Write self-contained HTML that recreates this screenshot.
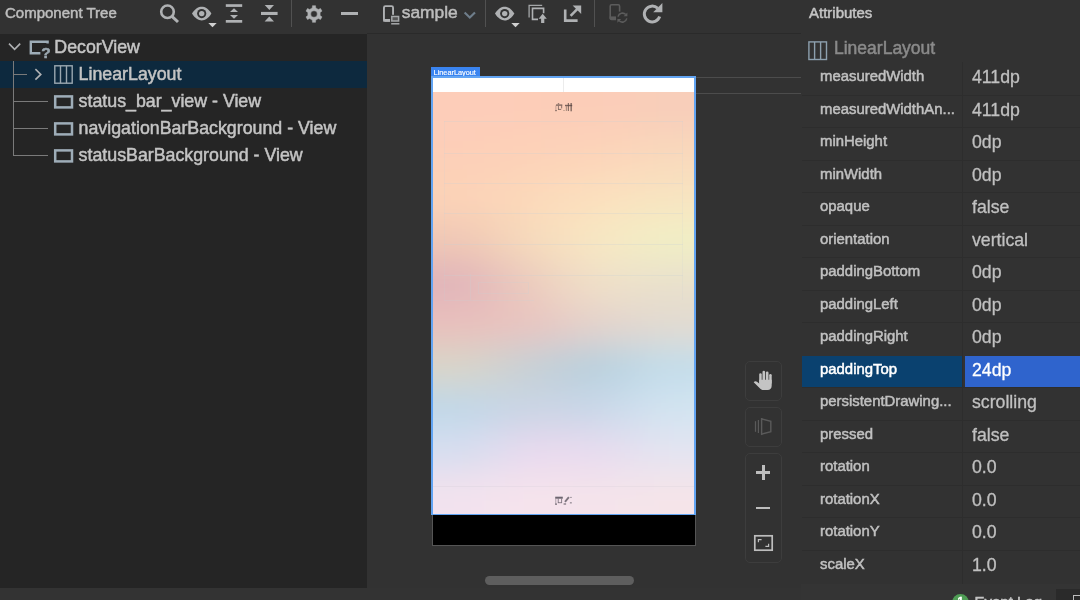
<!DOCTYPE html>
<html>
<head>
<meta charset="utf-8">
<style>
*{box-sizing:border-box;margin:0;padding:0}
html,body{width:1080px;height:600px;overflow:hidden;background:#323232;font-family:"Liberation Sans",sans-serif;color:#bbbbbb;-webkit-text-stroke:0.500px currentColor}
.abs{position:absolute}
#toolbar{left:0;top:0;width:1080px;height:34px;background:#323232}
#tbline{left:367px;top:33px;width:434px;height:1px;background:#2a2a2a}
#tree{left:0;top:33.700px;width:367px;height:554.300px;background:#252525}
.trow{position:absolute;left:0;width:367px;height:27px}
.trow.sel{background:#0d293e}
.ttext{position:absolute;left:78.600px;top:0.600px;height:27px;line-height:27px;font-size:17.8px;color:#c4c4c4;white-space:nowrap}
.sep{position:absolute;top:0;width:1px;height:27px;background:#515151}
svg{position:absolute;overflow:visible}
#right{left:801px;top:0;width:279px;height:600px;background:#323232}
.arow{position:absolute;left:1px;width:278px;height:32.5px;border-top:1px solid #2d2d2d}
.arow .n{position:absolute;left:18px;top:0;height:27px;line-height:27px;font-size:14.9px;color:#c0c0c0;white-space:nowrap}
.arow .v{position:absolute;left:170px;top:0;height:28px;line-height:28px;font-size:17.700px;color:#c0c0c0;white-space:nowrap;-webkit-text-stroke:0.300px currentColor}
.arow.sel .n{color:#fff}.arow.sel .v{color:#fff}
</style>
</head>
<body>
<div id="wrap" style="position:absolute;left:0;top:0;width:1080px;height:600px;will-change:transform">
<div id="toolbar" class="abs"></div>
<div id="tbline" class="abs"></div>


<div class="abs" style="left:5px;top:0;height:27px;line-height:26px;font-size:15px;color:#bdbdbd;white-space:nowrap">Component Tree</div>
<!-- search -->
<svg style="left:158px;top:3px" width="22" height="22" viewBox="0 0 22 22"><circle cx="9.500" cy="8.750" r="6.300" fill="none" stroke="#afb1b3" stroke-width="2.600"/><path d="M13.700 13.100 L20 19" stroke="#afb1b3" stroke-width="3"/></svg>
<!-- eye 1 -->
<svg style="left:191px;top:5px" width="28" height="24" viewBox="0 0 28 24"><path d="M1 8.6 C4 3.6 7.5 1.8 10.7 1.8 C14 1.8 17.5 3.6 20.4 8.6 C17.5 13.6 14 15.4 10.7 15.4 C7.5 15.4 4 13.6 1 8.6 Z" fill="#afb1b3"/><circle cx="10.7" cy="8.6" r="4.6" fill="#323232"/><circle cx="10.7" cy="8.6" r="2.7" fill="#afb1b3"/><path d="M17.3 18 L25.7 18 L21.5 22.2 Z" fill="#d0d0d0"/></svg>
<!-- expand all -->
<svg style="left:225px;top:3px" width="18" height="22" viewBox="0 0 18 22"><rect x="0.8" y="1.2" width="16.4" height="2.7" fill="#afb1b3"/><rect x="0.8" y="17" width="16.4" height="2.7" fill="#afb1b3"/><path d="M9 5.2 L13 9 L5 9 Z" fill="#afb1b3"/><path d="M5 12 L13 12 L9 15.8 Z" fill="#afb1b3"/></svg>
<!-- collapse all -->
<svg style="left:260px;top:3px" width="18" height="22" viewBox="0 0 18 22"><rect x="1" y="8.900" width="16.600" height="3.100" fill="#afb1b3"/><path d="M4.700 2 L14 2 L9.350 7.100 Z" fill="#afb1b3"/><path d="M9.3 13.6 L14 18.6 L4.6 18.6 Z" fill="#afb1b3"/></svg>
<div class="sep" style="left:291px"></div>
<!-- gear -->
<svg style="left:303.900px;top:3.600px" width="20" height="20" viewBox="0 0 20 20"><path fill="#afb1b3" fill-rule="evenodd" stroke="#afb1b3" stroke-width="0.500" stroke-linejoin="round" d="M11.76 3.95 L11.51 1.63 L8.49 1.63 L8.24 3.95 L5.64 5.45 L3.51 4.51 L2.00 7.12 L3.88 8.50 L3.88 11.50 L2.00 12.88 L3.51 15.49 L5.64 14.55 L8.24 16.05 L8.49 18.37 L11.51 18.37 L11.76 16.05 L14.36 14.55 L16.49 15.49 L18.00 12.88 L16.12 11.50 L16.12 8.50 L18.00 7.12 L16.49 4.51 L14.36 5.45 Z M13.30 10.00 A3.3 3.3 0 1 0 6.70 10.00 A3.3 3.3 0 1 0 13.30 10.00 Z"/></svg>
<!-- minus -->
<div class="abs" style="left:341px;top:11.6px;width:16.5px;height:3.4px;background:#afb1b3"></div>
<!-- device icon -->
<svg style="left:382px;top:4px" width="20" height="22" viewBox="0 0 20 22"><rect x="1.950" y="2.150" width="9.100" height="14.700" rx="1.500" fill="none" stroke="#afb1b3" stroke-width="1.900"/><rect x="1.200" y="15" width="8" height="2.700" fill="#afb1b3"/><rect x="8.100" y="10.800" width="10.400" height="8" fill="#323232"/><rect x="9.800" y="12.500" width="6.800" height="4.500" fill="#555" stroke="#a4a6a8" stroke-width="1.500"/><rect x="9.200" y="19.100" width="8.200" height="1.400" fill="#afb1b3"/></svg>
<div class="abs" style="left:401.700px;top:0.300px;height:27px;line-height:25px;font-size:17.4px;color:#bdbdbd;white-space:nowrap">sample</div>
<svg style="left:463px;top:10px" width="14" height="10" viewBox="0 0 14 10"><path d="M1.6 2.4 L6.8 7.6 L12 2.4" fill="none" stroke="#6e7d8a" stroke-width="2.1"/></svg>
<div class="sep" style="left:485px"></div>
<!-- eye 2 -->
<svg style="left:494px;top:5px" width="28" height="24" viewBox="0 0 28 24"><path d="M1 8.6 C4 3.6 7.5 1.8 10.7 1.8 C14 1.8 17.5 3.6 20.4 8.6 C17.5 13.6 14 15.4 10.7 15.4 C7.500 15.4 4 13.6 1 8.6 Z" fill="#afb1b3"/><circle cx="10.7" cy="8.6" r="4.6" fill="#323232"/><circle cx="10.7" cy="8.6" r="2.7" fill="#afb1b3"/><path d="M17.300 18 L25.7 18 L21.5 22.2 Z" fill="#d0d0d0"/></svg>
<!-- layers/export -->
<svg style="left:528px;top:4px" width="20" height="20" viewBox="0 0 20 20"><path d="M1.100 13.400 L1.100 1.300 L14.200 1.300" fill="none" stroke="#a4a6a8" stroke-width="1.300"/><path d="M10 15.400 L4.500 15.400 L4.500 4.400 L15.600 4.400 L15.600 9.200" fill="none" stroke="#afb1b3" stroke-width="1.600"/><path d="M14.700 9.700 L18.800 14.800 L16.300 14.800 L16.300 18.900 L13.100 18.900 L13.100 14.800 L10.600 14.800 Z" fill="#afb1b3"/></svg>
<svg style="left:563px;top:4px" width="20" height="20" viewBox="0 0 20 20"><path d="M2.2 5.6 L2.2 16.6 L14.6 16.6" fill="none" stroke="#afb1b3" stroke-width="2.6"/><path d="M7.6 11.8 L15.2 4.2" stroke="#afb1b3" stroke-width="2.6"/><path d="M9.6 1.400 L18.200 1.400 L18.2 10 Z" fill="#afb1b3"/></svg>
<div class="sep" style="left:594px"></div>
<!-- disabled device sync -->
<svg style="left:608px;top:3px" width="22" height="22" viewBox="0 0 22 22"><rect x="2.2" y="1.8" width="9.4" height="14.6" rx="1.4" fill="none" stroke="#5c5c5c" stroke-width="1.6"/><rect x="1.6" y="13.4" width="7" height="2.6" fill="#5c5c5c"/><rect x="8" y="8.6" width="12.6" height="12.6" fill="#323232"/><path d="M10 13.6 A4.6 4.6 0 0 1 17.8 11.600" fill="none" stroke="#5c5c5c" stroke-width="1.5"/><path d="M18.800 15.4 A4.6 4.6 0 0 1 10.900 17.600" fill="none" stroke="#5c5c5c" stroke-width="1.5"/><path d="M19.4 9.4 L19.4 13.200 L15.6 13.2 Z" fill="#5c5c5c"/><path d="M9.4 19.8 L9.4 16 L13.2 16 Z" fill="#5c5c5c"/></svg>
<!-- refresh -->
<svg style="left:642px;top:2px" width="22" height="22" viewBox="0 0 22 22"><path d="M15.600 6.200 A7.900 7.900 0 1 0 17.700 14.600" fill="none" stroke="#afb1b3" stroke-width="3"/><path d="M20.400 1.100 L20.400 10.200 L11.200 10.200 Z" fill="#afb1b3"/></svg>

<div id="tree" class="abs">

<div class="trow" style="top:0"><div class="ttext" style="left:54.300px">DecorView</div>
<svg style="left:8px;top:8px" width="14" height="10" viewBox="0 0 14 10"><path d="M1 1.6 L6.600 7.4 L12.200 1.6" fill="none" stroke="#afb1b3" stroke-width="1.6"/></svg>
<svg style="left:29px;top:6px" width="22" height="20" viewBox="0 0 22 20"><path d="M18.6 3.400 L18.6 1.800 L1.800 1.800 L1.800 13.200 L11.400 13.200" fill="none" stroke="#9eadb8" stroke-width="2.400"/><text x="12.200" y="18" font-family="Liberation Sans" font-weight="bold" font-size="15.500" fill="#9aa7b0" stroke="#9aa7b0" stroke-width="0.500">?</text></svg>
</div>
<div class="trow sel" style="top:27px"><div class="ttext">LinearLayout</div>
<svg style="left:34px;top:7px" width="9" height="13" viewBox="0 0 9 13"><path d="M1.400 1.200 L6.800 6.400 L1.400 11.600" fill="none" stroke="#afb1b3" stroke-width="1.6"/></svg>
<svg style="left:54px;top:4px" width="19" height="19" viewBox="0 0 19 19"><rect x="0.800" y="0.800" width="17.400" height="17.400" fill="none" stroke="#9aa7b0" stroke-width="1.4"/><path d="M6.500 0.800 V18.200 M12.500 0.800 V18.200" stroke="#9aa7b0" stroke-width="1.4"/></svg>
</div>
<div class="trow" style="top:54px"><div class="ttext">status_bar_view - View</div>
<svg style="left:54px;top:7.300px" width="20" height="14" viewBox="0 0 20 14"><rect x="1.200" y="1.400" width="16.800" height="11" fill="none" stroke="#9eadb8" stroke-width="2.500"/></svg></div>
<div class="trow" style="top:81px"><div class="ttext">navigationBarBackground - View</div>
<svg style="left:54px;top:7.300px" width="20" height="14" viewBox="0 0 20 14"><rect x="1.200" y="1.400" width="16.800" height="11" fill="none" stroke="#9eadb8" stroke-width="2.500"/></svg></div>
<div class="trow" style="top:108px"><div class="ttext">statusBarBackground - View</div>
<svg style="left:54px;top:7.300px" width="20" height="14" viewBox="0 0 20 14"><rect x="1.200" y="1.400" width="16.800" height="11" fill="none" stroke="#9eadb8" stroke-width="2.500"/></svg></div>
<!-- connector lines -->
<div class="abs" style="left:13px;top:27px;width:1px;height:95px;background:#7a7a7a"></div>
<div class="abs" style="left:13px;top:40px;width:14px;height:1px;background:#7a7a7a"></div>
<div class="abs" style="left:13px;top:67px;width:35px;height:1px;background:#7a7a7a"></div>
<div class="abs" style="left:13px;top:94px;width:35px;height:1px;background:#7a7a7a"></div>
<div class="abs" style="left:13px;top:121px;width:35px;height:1px;background:#7a7a7a"></div>

</div>


<!-- grey guide lines to the right of phone -->
<div class="abs" style="left:695px;top:77px;width:106px;height:1px;background:#4c4c4c"></div>
<div class="abs" style="left:695px;top:92.500px;width:106px;height:1px;background:#4c4c4c"></div>
<!-- label -->
<div class="abs" style="left:431px;top:67px;width:48.500px;height:11px;background:#3a84f0;color:#fff;font-size:7.300px;line-height:12px;padding-left:2.600px;overflow:hidden;-webkit-text-stroke:0.150px #fff;white-space:nowrap">LinearLayout</div>
<!-- black nav bar -->
<div class="abs" style="left:431.500px;top:514px;width:264px;height:31.500px;background:#000;border:1px solid #555"></div>
<!-- phone -->
<div id="phone" class="abs" style="left:431px;top:76px;width:264.500px;height:439px;background:#62a4f2"></div>
<div class="abs" style="left:432.500px;top:78.300px;width:261.500px;height:13.700px;background:#fff"></div>
<div class="abs" style="left:563px;top:78px;width:1px;height:14px;background:#ececec"></div>
<div id="grad" class="abs" style="left:432.500px;top:92px;width:261.500px;height:421.500px;overflow:hidden;background:#f0d8d0">
<!--GRADSVG--><svg id="gradsvg" style="left:0;top:0;overflow:hidden" width="261.5" height="421.5" viewBox="0 0 262 422" preserveAspectRatio="none"><defs><filter id="gb" filterUnits="userSpaceOnUse" x="-90" y="-90" width="442" height="602"><feGaussianBlur stdDeviation="30 17"/></filter></defs><g filter="url(#gb)"><rect x="-90.0" y="-90.0" width="90.5" height="90.5" fill="#fdcdb9"/><rect x="0.0" y="-90.0" width="66.0" height="90.5" fill="#fdcdb9"/><rect x="65.5" y="-90.0" width="66.0" height="90.5" fill="#fdcdb8"/><rect x="131.0" y="-90.0" width="66.0" height="90.5" fill="#fccdb8"/><rect x="196.5" y="-90.0" width="66.0" height="90.5" fill="#f8ceba"/><rect x="262.0" y="-90.0" width="90.5" height="90.5" fill="#f8ceba"/><rect x="-90.0" y="0.0" width="90.5" height="42.7" fill="#fdcdb9"/><rect x="0.0" y="0.0" width="66.0" height="42.7" fill="#fdcdb9"/><rect x="65.5" y="0.0" width="66.0" height="42.7" fill="#fdcdb8"/><rect x="131.0" y="0.0" width="66.0" height="42.7" fill="#fccdb8"/><rect x="196.5" y="0.0" width="66.0" height="42.7" fill="#f8ceba"/><rect x="262.0" y="0.0" width="90.5" height="42.7" fill="#f8ceba"/><rect x="-90.0" y="42.2" width="90.5" height="42.7" fill="#fdcfb8"/><rect x="0.0" y="42.2" width="66.0" height="42.7" fill="#fdcfb8"/><rect x="65.5" y="42.2" width="66.0" height="42.7" fill="#fdd2b8"/><rect x="131.0" y="42.2" width="66.0" height="42.7" fill="#fdd4b9"/><rect x="196.5" y="42.2" width="66.0" height="42.7" fill="#f9d9bc"/><rect x="262.0" y="42.2" width="90.5" height="42.7" fill="#f9d9bc"/><rect x="-90.0" y="84.4" width="90.5" height="42.7" fill="#fcd3b7"/><rect x="0.0" y="84.4" width="66.0" height="42.7" fill="#fcd3b7"/><rect x="65.5" y="84.4" width="66.0" height="42.7" fill="#fcd9ba"/><rect x="131.0" y="84.4" width="66.0" height="42.7" fill="#fce0be"/><rect x="196.5" y="84.4" width="66.0" height="42.7" fill="#f8e4c1"/><rect x="262.0" y="84.4" width="90.5" height="42.7" fill="#f8e4c1"/><rect x="-90.0" y="126.6" width="90.5" height="42.7" fill="#f0c8b5"/><rect x="0.0" y="126.6" width="66.0" height="42.7" fill="#f0c8b5"/><rect x="65.5" y="126.6" width="66.0" height="42.7" fill="#f7dbbc"/><rect x="131.0" y="126.6" width="66.0" height="42.7" fill="#f8e7c3"/><rect x="196.5" y="126.6" width="66.0" height="42.7" fill="#f1efc5"/><rect x="262.0" y="126.6" width="90.5" height="42.7" fill="#f1efc5"/><rect x="-90.0" y="168.8" width="90.5" height="42.7" fill="#e0b4ba"/><rect x="0.0" y="168.8" width="66.0" height="42.7" fill="#e0b4ba"/><rect x="65.5" y="168.8" width="66.0" height="42.7" fill="#ecccbe"/><rect x="131.0" y="168.8" width="66.0" height="42.7" fill="#f1e1c8"/><rect x="196.5" y="168.8" width="66.0" height="42.7" fill="#e9e1cc"/><rect x="262.0" y="168.8" width="90.5" height="42.7" fill="#e9e1cc"/><rect x="-90.0" y="211.0" width="90.5" height="42.7" fill="#e9bfbc"/><rect x="0.0" y="211.0" width="66.0" height="42.7" fill="#e9bfbc"/><rect x="65.5" y="211.0" width="66.0" height="42.7" fill="#e9c4c0"/><rect x="131.0" y="211.0" width="66.0" height="42.7" fill="#e4d3cc"/><rect x="196.5" y="211.0" width="66.0" height="42.7" fill="#e2dad0"/><rect x="262.0" y="211.0" width="90.5" height="42.7" fill="#e2dad0"/><rect x="-90.0" y="253.2" width="90.5" height="42.7" fill="#d9d5c8"/><rect x="0.0" y="253.2" width="66.0" height="42.7" fill="#d9d5c8"/><rect x="65.5" y="253.2" width="66.0" height="42.7" fill="#c6d0d6"/><rect x="131.0" y="253.2" width="66.0" height="42.7" fill="#b6cfdd"/><rect x="196.5" y="253.2" width="66.0" height="42.7" fill="#c3ddea"/><rect x="262.0" y="253.2" width="90.5" height="42.7" fill="#c3ddea"/><rect x="-90.0" y="295.4" width="90.5" height="42.7" fill="#c0d8e8"/><rect x="0.0" y="295.4" width="66.0" height="42.7" fill="#c0d8e8"/><rect x="65.5" y="295.4" width="66.0" height="42.7" fill="#cbd4e4"/><rect x="131.0" y="295.4" width="66.0" height="42.7" fill="#c8d7e8"/><rect x="196.5" y="295.4" width="66.0" height="42.7" fill="#d2e4f1"/><rect x="262.0" y="295.4" width="90.5" height="42.7" fill="#d2e4f1"/><rect x="-90.0" y="337.6" width="90.5" height="42.7" fill="#d6def0"/><rect x="0.0" y="337.6" width="66.0" height="42.7" fill="#d6def0"/><rect x="65.5" y="337.6" width="66.0" height="42.7" fill="#e9d9ee"/><rect x="131.0" y="337.6" width="66.0" height="42.7" fill="#e7dbef"/><rect x="196.5" y="337.6" width="66.0" height="42.7" fill="#e3e4f2"/><rect x="262.0" y="337.6" width="90.5" height="42.7" fill="#e3e4f2"/><rect x="-90.0" y="379.8" width="90.5" height="42.7" fill="#f2e2ee"/><rect x="0.0" y="379.8" width="66.0" height="42.7" fill="#f2e2ee"/><rect x="65.5" y="379.8" width="66.0" height="42.7" fill="#f6e3ec"/><rect x="131.0" y="379.8" width="66.0" height="42.7" fill="#f4e3eb"/><rect x="196.5" y="379.8" width="66.0" height="42.7" fill="#f5e4e9"/><rect x="262.0" y="379.8" width="90.5" height="42.7" fill="#f5e4e9"/><rect x="-90.0" y="422.0" width="90.5" height="90.5" fill="#f2e2ee"/><rect x="0.0" y="422.0" width="66.0" height="90.5" fill="#f2e2ee"/><rect x="65.5" y="422.0" width="66.0" height="90.5" fill="#f6e3ec"/><rect x="131.0" y="422.0" width="66.0" height="90.5" fill="#f4e3eb"/><rect x="196.5" y="422.0" width="66.0" height="90.5" fill="#f5e4e9"/><rect x="262.0" y="422.0" width="90.5" height="90.5" fill="#f5e4e9"/></g></svg><!--/GRADSVG-->
<div class="abs" style="left:11.500px;top:29.0px;width:239px;height:1px;background:rgba(200,208,212,0.28)"></div><div class="abs" style="left:11.500px;top:61.0px;width:239px;height:1px;background:rgba(200,208,212,0.28)"></div><div class="abs" style="left:11.500px;top:90.5px;width:239px;height:1px;background:rgba(200,208,212,0.28)"></div><div class="abs" style="left:11.500px;top:121.0px;width:239px;height:1px;background:rgba(200,208,212,0.28)"></div><div class="abs" style="left:11.500px;top:152.0px;width:239px;height:1px;background:rgba(200,208,212,0.28)"></div><div class="abs" style="left:11.500px;top:183.0px;width:239px;height:1px;background:rgba(200,208,212,0.28)"></div>
<div class="abs" style="left:11.500px;top:29px;width:1px;height:179px;background:rgba(200,208,212,0.170)"></div>
<div class="abs" style="left:249.500px;top:29px;width:1px;height:179px;background:rgba(200,208,212,0.170)"></div>
<div class="abs" style="left:11.500px;top:207.500px;width:90px;height:1px;background:rgba(200,208,212,0.22)"></div>
<div class="abs" style="left:37.500px;top:182px;width:1px;height:26px;background:rgba(200,208,212,0.22)"></div>
<div class="abs" style="left:45.500px;top:189.500px;width:51px;height:12px;border:1px solid rgba(200,208,212,0.22)"></div>
<div class="abs" style="left:0;top:394px;width:262px;height:1px;background:rgba(190,190,200,0.16)"></div>
</div>
<!-- tiny glyphs -->
<svg style="left:550px;top:100px" width="26" height="14" viewBox="0 0 26 14"><defs><filter id="tb" x="-20%" y="-20%" width="140%" height="140%"><feGaussianBlur stdDeviation="0.350"/></filter></defs><g fill="#5a4844" filter="url(#tb)"><rect x="6.00" y="4.40" width="6.30" height="1.40" opacity="0.75"/><rect x="7.80" y="3.00" width="1.40" height="1.40" opacity="0.6"/><rect x="5.40" y="5.50" width="1.00" height="4.50" opacity="0.35"/><rect x="7.90" y="5.80" width="1.10" height="3.60" opacity="0.6"/><rect x="11.00" y="5.50" width="1.20" height="2.90" opacity="0.6"/><rect x="8.00" y="8.90" width="3.20" height="1.00" opacity="0.7"/><rect x="5.00" y="10.00" width="2.00" height="1.20" opacity="0.6"/><rect x="15.00" y="4.80" width="7.20" height="1.40" opacity="0.8"/><rect x="17.80" y="3.00" width="1.20" height="8.00" opacity="0.7"/><rect x="20.50" y="3.00" width="1.30" height="8.30" opacity="0.8"/><rect x="15.80" y="6.20" width="1.10" height="4.80" opacity="0.5"/><rect x="13.20" y="10.00" width="1.60" height="1.00" opacity="0.35"/></g></svg>
<svg style="left:550px;top:494px" width="26" height="14" viewBox="0 0 26 14"><g fill="#55505a" filter="url(#tb)"><rect x="5.20" y="2.70" width="7.60" height="2.00" opacity="0.85"/><rect x="5.20" y="4.70" width="1.10" height="5.90" opacity="0.4"/><rect x="7.70" y="4.70" width="1.10" height="4.40" opacity="0.6"/><rect x="11.00" y="4.70" width="1.10" height="4.40" opacity="0.6"/><rect x="8.20" y="8.10" width="3.30" height="1.10" opacity="0.6"/><rect x="5.20" y="9.40" width="1.80" height="1.60" opacity="0.6"/><rect x="13.60" y="9.30" width="2.50" height="1.40" opacity="0.7"/><rect x="20.00" y="2.90" width="1.90" height="1.00" opacity="0.5"/><rect x="19.90" y="8.10" width="1.90" height="1.40" opacity="0.55"/><path d="M18.90 3.20 L15.00 7.80" stroke="#55505a" stroke-width="1.900" opacity="0.75"/></g></svg>
<!-- scrollbar -->
<div class="abs" style="left:484.500px;top:575.500px;width:149px;height:9.500px;border-radius:5px;background:#5e5e5e"></div>
<!-- control buttons -->
<div class="abs" style="left:745px;top:360.500px;width:37px;height:40px;border:1px solid #3d3d3d;border-radius:5px"></div>
<div class="abs" style="left:745px;top:406.500px;width:37px;height:40px;border:1px solid #3d3d3d;border-radius:5px"></div>
<div class="abs" style="left:745px;top:452.500px;width:37px;height:110.500px;border:1px solid #3d3d3d;border-radius:5px"></div>

<!-- hand -->
<svg style="left:753px;top:370px" width="20" height="21" viewBox="0 0 20 21"><g fill="#c4c4c4"><rect x="6.200" y="3.200" width="2.500" height="10" rx="1.250"/><rect x="9.500" y="0.700" width="2.600" height="12" rx="1.300"/><rect x="12.900" y="1.500" width="2.600" height="12" rx="1.300"/><rect x="16.200" y="4.100" width="2.500" height="10" rx="1.250"/><path d="M6.200 9.800 H18.700 V15.600 C18.700 18.600 17.200 20 14.600 20 H10.600 C8.800 20 7.800 19.400 6.800 18.200 L0.700 12.300 C1.500 11.100 2.900 10.900 4 11.800 L6.200 13.600 Z"/></g></svg>
<!-- 3d (disabled) -->
<svg style="left:754px;top:417px" width="20" height="19" viewBox="0 0 20 19"><path d="M1.500 4.200 V14.800" stroke="#5a5a5a" stroke-width="1.200"/><path d="M4.400 3 V16" stroke="#5a5a5a" stroke-width="1.200"/><path d="M7.600 1.800 L16.800 4.200 L16.800 14.600 L7.600 17.200 Z" fill="none" stroke="#5a5a5a" stroke-width="1.400"/></svg>
<!-- plus -->
<div class="abs" style="left:756px;top:471.100px;width:14.400px;height:2.900px;background:#bdbdbd"></div>
<div class="abs" style="left:761.800px;top:465.300px;width:2.900px;height:14.400px;background:#bdbdbd"></div>
<!-- minus -->
<div class="abs" style="left:756.400px;top:506.600px;width:14px;height:2.900px;background:#bdbdbd"></div>
<!-- fit -->
<svg style="left:753px;top:534px" width="22" height="19" viewBox="0 0 22 19"><rect x="1.800" y="1.800" width="17.400" height="14.400" fill="none" stroke="#bdbdbd" stroke-width="1.700"/><path d="M5.400 8.200 V5.600 H8.600" fill="none" stroke="#bdbdbd" stroke-width="1.200"/><path d="M15.600 9.800 V12.400 H12.400" fill="none" stroke="#bdbdbd" stroke-width="1.200"/></svg>



<div id="right" class="abs">

<div class="abs" style="left:8px;top:-0.500px;height:27px;line-height:26px;font-size:15px;color:#c4c4c4">Attributes</div>
<svg style="left:7.300px;top:40.500px" width="20" height="20" viewBox="0 0 20 20"><rect x="0.900" y="0.900" width="17.600" height="17.600" fill="none" stroke="#8da0ae" stroke-width="1.400"/><path d="M6.600 0.900 V18.500 M12.600 0.900 V18.500" stroke="#8da0ae" stroke-width="1.400"/></svg>
<div class="abs" style="left:33px;top:35px;height:27px;line-height:27px;font-size:17.500px;color:#8a8a8a;white-space:nowrap">LinearLayout</div>
<div class="arow" style="top:62.0px;border-top-color:transparent"><div class="n">measuredWidth</div><div class="v">411dp</div></div>
<div class="arow" style="top:94.5px"><div class="n">measuredWidthAn...</div><div class="v">411dp</div></div>
<div class="arow" style="top:127.0px"><div class="n">minHeight</div><div class="v">0dp</div></div>
<div class="arow" style="top:159.5px"><div class="n">minWidth</div><div class="v">0dp</div></div>
<div class="arow" style="top:192.0px"><div class="n">opaque</div><div class="v">false</div></div>
<div class="arow" style="top:224.5px"><div class="n">orientation</div><div class="v">vertical</div></div>
<div class="arow" style="top:257.0px"><div class="n">paddingBottom</div><div class="v">0dp</div></div>
<div class="arow" style="top:289.5px"><div class="n">paddingLeft</div><div class="v">0dp</div></div>
<div class="arow" style="top:322.0px"><div class="n">paddingRight</div><div class="v">0dp</div></div>
<div class="arow sel" style="top:354.5px;border-top:none"><div class="abs" style="left:0;top:1.500px;width:160px;height:31.300px;background:#0a416f"></div><div class="abs" style="left:162.700px;top:1.500px;width:115.300px;height:31.300px;background:#2f64cd"></div><div class="n" style="top:1.500px">paddingTop</div><div class="v" style="top:1.500px">24dp</div></div>
<div class="arow" style="top:387.0px"><div class="n">persistentDrawing...</div><div class="v">scrolling</div></div>
<div class="arow" style="top:419.5px"><div class="n">pressed</div><div class="v">false</div></div>
<div class="arow" style="top:452.0px"><div class="n">rotation</div><div class="v">0.0</div></div>
<div class="arow" style="top:484.5px"><div class="n">rotationX</div><div class="v">0.0</div></div>
<div class="arow" style="top:517.0px"><div class="n">rotationY</div><div class="v">0.0</div></div>
<div class="arow" style="top:549.5px"><div class="n">scaleX</div><div class="v">1.0</div></div>

<div class="abs" style="left:161px;top:62px;width:1px;height:521.500px;background:#2d2d2d"></div>

</div>


<div class="abs" style="left:0;top:588px;width:801px;height:12px;background:#333333"></div>
<div class="abs" style="left:801px;top:583.500px;width:279px;height:17px;background:#343434"></div>
<div class="abs" style="left:1056px;top:589px;width:24px;height:11px;background:#2a2a2a"></div>
<div class="abs" style="left:952px;top:593.500px;width:17px;height:17px;border-radius:50%;background:#4f9d55;color:#fff;font-size:11px;line-height:15px;text-align:center;font-weight:bold">1</div>
<div class="abs" style="left:974.500px;top:591px;font-size:15px;line-height:22px;color:#c4c4c4;white-space:nowrap">Event Log</div>
<div class="abs" style="left:1073px;top:595px;width:10px;height:10px;border:1.500px solid #bdbdbd"></div>

</div>
</body>
</html>
